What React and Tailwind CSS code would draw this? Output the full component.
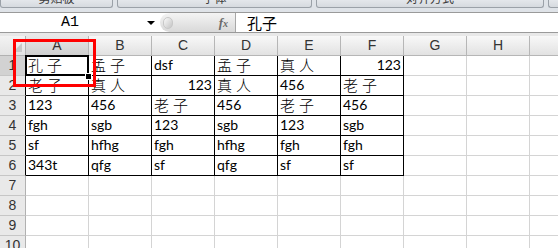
import React from 'react';

const cols = ['A', 'B', 'C', 'D', 'E', 'F', 'G', 'H'];

// cell value; {v, r:true} means right aligned number
const data = [
  ['孔子', '孟子', 'dsf', '孟子', '真人', { v: '123', r: true }],
  ['老子', '真人', { v: '123', r: true }, '真人', '456', '老子'],
  ['123', '456', '老子', '456', '老子', '456'],
  ['fgh', 'sgb', '123', 'sgb', '123', 'sgb'],
  ['sf', 'hfhg', 'fgh', 'hfhg', 'fgh', 'fgh'],
  ['343t', 'qfg', 'sf', 'qfg', 'sf', 'sf'],
];

const isCjk = (s) => /[\u4e00-\u9fff]/.test(s);

function Cell({ value, boxed }) {
  const v = typeof value === 'object' && value ? value.v : value;
  const right = typeof value === 'object' && value ? value.r : false;
  const cjk = v && isCjk(v);
  return (
    <div
      className={`h-[20px] border-r border-b flex items-end whitespace-nowrap ${
        boxed ? 'border-black' : 'border-[#d4d4d4]'
      } ${right ? 'justify-end pr-[2px]' : 'pl-[2px]'}`}
    >
      {v ? (
        cjk ? (
          <span className="text-[15px] leading-[15px] tracking-[4px] pb-[3px] text-black font-['Noto_Sans_CJK_SC',sans-serif] font-light">{v}</span>
        ) : (
          <span className="text-[14px] leading-[14px] pb-[3px] text-black font-['Lato',sans-serif]">{v}</span>
        )
      ) : null}
    </div>
  );
}

function RibbonLabels() {
  return (
    <div className="h-[12px] bg-[#dfe3e8] flex gap-[4px] overflow-hidden">
      <div className="w-[113px] h-[8px] rounded-b-[3px] border border-t-0 border-[#9ba1a8] bg-gradient-to-b from-[#e4e7eb] to-[#d6dadf] flex justify-center overflow-hidden">
        <span className="mt-[-9px] text-[12px] leading-[14px] text-[#3c3c3c] font-['Noto_Sans_CJK_SC',sans-serif]">剪贴板</span>
      </div>
      <div className="w-[195px] h-[8px] rounded-b-[3px] border border-t-0 border-[#9ba1a8] bg-gradient-to-b from-[#e4e7eb] to-[#d6dadf] flex justify-center overflow-hidden">
        <span className="mt-[-9px] text-[12px] leading-[14px] text-[#3c3c3c] font-['Noto_Sans_CJK_SC',sans-serif]">字体</span>
      </div>
      <div className="w-[228px] h-[8px] rounded-b-[3px] border border-t-0 border-[#9ba1a8] bg-gradient-to-b from-[#e4e7eb] to-[#d6dadf] flex justify-center overflow-hidden">
        <span className="mt-[-9px] text-[12px] leading-[14px] text-[#3c3c3c] font-['Noto_Sans_CJK_SC',sans-serif]">对齐方式</span>
      </div>
      <div className="flex-1 h-[8px] rounded-bl-[3px] border border-t-0 border-r-0 border-[#9ba1a8] bg-gradient-to-b from-[#e4e7eb] to-[#d6dadf]" />
    </div>
  );
}

function FormulaBar() {
  return (
    <div className="h-[21px] border-t border-b border-[#9a9a9a] bg-white flex">
      <div className="w-[160px] flex items-center relative">
        <span className="flex-1 text-center text-[15px] leading-none text-black font-['Liberation_Mono',monospace] pr-[20px]">A1</span>
        <span className="absolute left-[147px] top-[8px] w-0 h-0 border-l-[4px] border-r-[4px] border-t-[4px] border-l-transparent border-r-transparent border-t-black" />
      </div>
      <div className="w-[76px] h-full flex items-center rounded-l-[10px] border-r border-[#a7a7a7] bg-gradient-to-b from-[#f4f4f4] to-[#d9d9d9]">
        <span className="ml-[3px] w-[10px] h-[12px] rounded-full bg-gradient-to-br from-[#fafafa] to-[#c4c4c4] border border-[#c8c8c8]" />
        <span className="ml-auto mr-[7px] text-[13px] italic font-bold text-[#6a6a6a] font-['Liberation_Serif',serif] leading-none">
          f<span className="text-[10px]">x</span>
        </span>
      </div>
      <div className="flex-1 flex items-center pl-[11px]">
        <span className="text-[15px] leading-none text-black font-['Noto_Sans_CJK_SC',sans-serif]">孔子</span>
      </div>
    </div>
  );
}

export default function App() {
  return (
    <div className="w-[558px] h-[248px] overflow-hidden bg-white relative select-none">
      <RibbonLabels />
      <FormulaBar />
      <div className="h-[3px] bg-[#e8e8e8]" />

      <div className="grid grid-cols-[26px_repeat(8,63px)_1fr]">
        {/* corner with select-all triangle */}
        <div className="h-[20px] border-r border-b border-[#b1b1b1] bg-gradient-to-b from-[#f3f3f3] to-[#e3e3e3] relative">
          <span className="absolute right-[3px] bottom-[3px] w-0 h-0 border-b-[9px] border-l-[9px] border-l-transparent border-b-[#c8c8c8]" />
        </div>
        {cols.map((c, i) => (
          <div
            key={c}
            className={`h-[20px] border-r border-b border-[#b6b6b6] flex items-center justify-center text-[14px] text-[#333] font-['Liberation_Sans',sans-serif] bg-gradient-to-b ${
              i === 0 ? 'from-[#e8e8e8] to-[#cfcfcf]' : 'from-[#f8f8f8] to-[#e2e2e2]'
            }`}
          >
            {c}
          </div>
        ))}
        <div className="h-[20px] border-b border-[#b6b6b6] bg-gradient-to-b from-[#f8f8f8] to-[#e2e2e2]" />

        {Array.from({ length: 10 }).map((_, r) => (
          <React.Fragment key={r}>
            <div
              className={`h-[20px] border-r border-b flex items-center justify-center text-[14px] text-[#333] font-['Liberation_Sans',sans-serif] ${
                r < 6 ? 'border-r-black' : 'border-r-[#b1b1b1]'
              } border-b-[#c6c6c6] ${r === 0 ? 'bg-[#d2d2d2]' : 'bg-[#e9e9e9]'}`}
            >
              {r + 1}
            </div>
            {cols.map((c, ci) => (
              <Cell key={c} value={r < 6 && ci < 6 ? data[r][ci] : ''} boxed={r < 6 && ci < 6} />
            ))}
            <div className="h-[20px] border-b border-[#d4d4d4]" />
          </React.Fragment>
        ))}
      </div>

      {/* active cell A1 with fill handle */}
      <div className="absolute left-[25px] top-[55px] w-[64px] h-[21px] border-2 border-black pointer-events-none" />
      <div className="absolute left-[85px] top-[73px] w-[7px] h-[7px] bg-black border border-white" />

      {/* red highlight box */}
      <div className="absolute left-[13px] top-[39px] w-[83px] h-[48px] border-[3px] border-[#ff0000] pointer-events-none" />
    </div>
  );
}
